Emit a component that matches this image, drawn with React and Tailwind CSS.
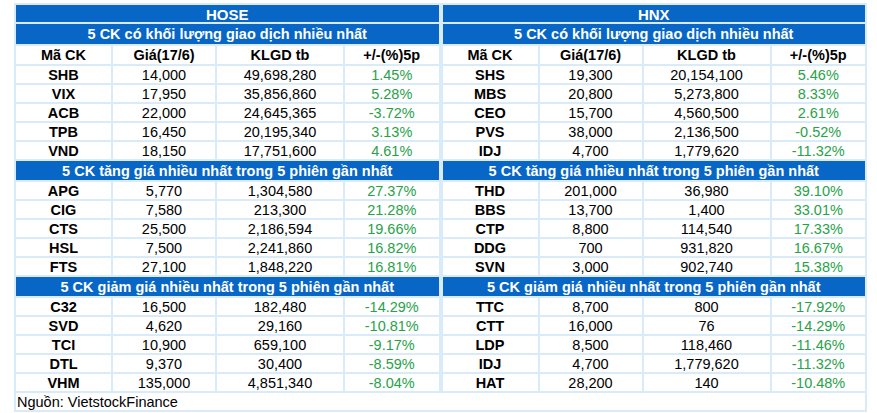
const HOSE = {
  name: "HOSE",
  sections: [
    {
      title: "5 CK có khối lượng giao dịch nhiều nhất",
      rows: [
        ["SHB", "14,000", "49,698,280", "1.45%"],
        ["VIX", "17,950", "35,856,860", "5.28%"],
        ["ACB", "22,000", "24,645,365", "-3.72%"],
        ["TPB", "16,450", "20,195,340", "3.13%"],
        ["VND", "18,150", "17,751,600", "4.61%"],
      ],
    },
    {
      title: "5 CK tăng giá nhiều nhất trong 5 phiên gần nhất",
      rows: [
        ["APG", "5,770", "1,304,580", "27.37%"],
        ["CIG", "7,580", "213,300", "21.28%"],
        ["CTS", "25,500", "2,186,594", "19.66%"],
        ["HSL", "7,500", "2,241,860", "16.82%"],
        ["FTS", "27,100", "1,848,220", "16.81%"],
      ],
    },
    {
      title: "5 CK giảm giá nhiều nhất trong 5 phiên gần nhất",
      rows: [
        ["C32", "16,500", "182,480", "-14.29%"],
        ["SVD", "4,620", "29,160", "-10.81%"],
        ["TCI", "10,900", "659,100", "-9.17%"],
        ["DTL", "9,370", "30,400", "-8.59%"],
        ["VHM", "135,000", "4,851,340", "-8.04%"],
      ],
    },
  ],
};

const HNX = {
  name: "HNX",
  sections: [
    {
      title: "5 CK có khối lượng giao dịch nhiều nhất",
      rows: [
        ["SHS", "19,300", "20,154,100", "5.46%"],
        ["MBS", "20,800", "5,273,800", "8.33%"],
        ["CEO", "15,700", "4,560,500", "2.61%"],
        ["PVS", "38,000", "2,136,500", "-0.52%"],
        ["IDJ", "4,700", "1,779,620", "-11.32%"],
      ],
    },
    {
      title: "5 CK tăng giá nhiều nhất trong 5 phiên gần nhất",
      rows: [
        ["THD", "201,000", "36,980", "39.10%"],
        ["BBS", "13,700", "1,400", "33.01%"],
        ["CTP", "8,800", "114,540", "17.33%"],
        ["DDG", "700", "931,820", "16.67%"],
        ["SVN", "3,000", "902,740", "15.38%"],
      ],
    },
    {
      title: "5 CK giảm giá nhiều nhất trong 5 phiên gần nhất",
      rows: [
        ["TTC", "8,700", "800", "-17.92%"],
        ["CTT", "16,000", "76", "-14.29%"],
        ["LDP", "8,500", "118,460", "-11.46%"],
        ["IDJ", "4,700", "1,779,620", "-11.32%"],
        ["HAT", "28,200", "140", "-10.48%"],
      ],
    },
  ],
};

const gridCls = "grid grid-cols-[95px_102px_126px_1fr] gap-[2px]";
const cellCls = "bg-white h-[17px] flex items-center justify-center leading-none pt-[1px]";
const blueCls = "bg-[#0866c6] text-white font-bold flex items-center justify-center leading-none pt-[1px]";

function Panel({ data }) {
  return (
    <div className="flex-1 flex flex-col gap-[2px]">
      <div className={`${blueCls} h-[17px] text-[15px]`}>{data.name}</div>
      {data.sections.map((s, i) => (
        <div key={i} className="flex flex-col gap-[2px]">
          <div className={`${blueCls} ${i === 0 ? "h-[20px]" : "h-[19px]"}`}>{s.title}</div>
          {i === 0 && (
            <div className={gridCls}>
              {["Mã CK", "Giá(17/6)", "KLGD tb", "+/-(%)5p"].map((h) => (
                <div key={h} className="bg-white h-[18px] flex items-center justify-center font-bold leading-none pt-[1px]">
                  {h}
                </div>
              ))}
            </div>
          )}
          {s.rows.map((r) => (
            <div key={r[0] + r[3]} className={gridCls}>
              <div className={`${cellCls} font-bold`}>{r[0]}</div>
              <div className={cellCls}>{r[1]}</div>
              <div className={cellCls}>{r[2]}</div>
              <div className={`${cellCls} text-[#27a24a]`}>{r[3]}</div>
            </div>
          ))}
        </div>
      ))}
    </div>
  );
}

export default function App() {
  return (
    <div className="w-[877px] h-[413px] bg-white pt-[3px] pl-[14px] text-[14.5px] text-black font-['Liberation_Sans',Arial,sans-serif]">
      <div className="w-[853px] bg-[#d9eaf8] p-[2px] flex flex-col gap-[2px]">
        <div className="flex gap-[4px]">
          <Panel data={HOSE} />
          <Panel data={HNX} />
        </div>
        <div className="bg-white h-[17px] flex items-center pl-[1px] leading-none pt-[1px]">Nguồn: VietstockFinance</div>
      </div>
    </div>
  );
}
